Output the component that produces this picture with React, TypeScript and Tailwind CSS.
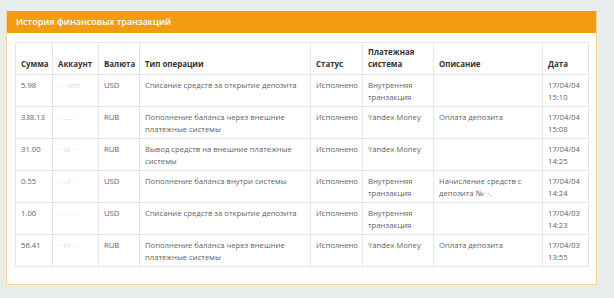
import React from 'react';

type Row = {
  sum: string;
  account: string;
  currency: string;
  type: string;
  status: string;
  system: string;
  description: string;
  date: string;
  time: string;
};

const rows: Row[] = [
  { sum: '5.98', account: '·.·,·ion', currency: 'USD', type: 'Списание средств за открытие депозита', status: 'Исполнено', system: 'Внутренняя транзакция', description: '', date: '17/04/04', time: '15:10' },
  { sum: '338.13', account: '·.·;...·', currency: 'RUB', type: 'Пополнение баланса через внешние платежные системы', status: 'Исполнено', system: 'Yandex Money', description: 'Оплата депозита', date: '17/04/04', time: '15:08' },
  { sum: '31.00', account: '· ·ui·· ·', currency: 'RUB', type: 'Вывод средств на внешние платежные системы', status: 'Исполнено', system: 'Yandex Money', description: '', date: '17/04/04', time: '14:25' },
  { sum: '0.55', account: '·  ,.·l··', currency: 'USD', type: 'Пополнение баланса внутри системы', status: 'Исполнено', system: 'Внутренняя транзакция', description: 'Начисление средств с депозита №·  ·.', date: '17/04/04', time: '14:24' },
  { sum: '1.00', account: '·.·,·.·.·.', currency: 'USD', type: 'Списание средств за открытие депозита', status: 'Исполнено', system: 'Внутренняя транзакция', description: '', date: '17/04/03', time: '14:23' },
  { sum: '56.41', account: '·   ·i·l··,', currency: 'RUB', type: 'Пополнение баланса через внешние платежные системы', status: 'Исполнено', system: 'Yandex Money', description: 'Оплата депозита', date: '17/04/03', time: '13:55' },
];

const th = 'h-[32px] border border-[#e6e6e6] px-[5px] pb-[4px] pt-[3px] text-left align-bottom text-[7.9px] font-bold text-[#333]';
const td = 'h-[32px] border border-[#e6e6e6] px-[5px] pt-[4px] pb-[3px] align-top text-[#5f5f5f] font-normal';

export default function App() {
  return (
    <div className="h-[298px] w-[614px] overflow-hidden bg-[#e9eced] pt-[11px] pl-[6px] pr-[17px]" style={{ fontFamily: '"Open Sans", sans-serif' }}>
      <div className="h-[274px] border border-[#f5d49a] border-t-0 bg-white">
        <div className="flex h-[22px] items-center bg-[#f39c12] px-[9px] text-[9px] font-semibold text-white">
          История финансовых транзакций
        </div>
        <div className="px-[8px] pt-[9px]">
          <table className="w-[573px] table-fixed border-collapse text-[7.7px] leading-[12px]">
            <colgroup>
              <col className="w-[37px]" />
              <col className="w-[46px]" />
              <col className="w-[41px]" />
              <col className="w-[171px]" />
              <col className="w-[52px]" />
              <col className="w-[71px]" />
              <col className="w-[109px]" />
              <col className="w-[46px]" />
            </colgroup>
            <thead>
              <tr>
                <th className={th}>Сумма</th>
                <th className={th}>Аккаунт</th>
                <th className={th}>Валюта</th>
                <th className={th}>Тип операции</th>
                <th className={th}>Статус</th>
                <th className={th}>Платежная<br />система</th>
                <th className={th}>Описание</th>
                <th className={th}>Дата</th>
              </tr>
            </thead>
            <tbody>
              {rows.map((r, i) => (
                <tr key={i}>
                  <td className={td}>{r.sum}</td>
                  <td className={`${td} overflow-hidden whitespace-nowrap text-[#d4d4d4]`}>{r.account}</td>
                  <td className={td}>{r.currency}</td>
                  <td className={td}>{r.type}</td>
                  <td className={td}>{r.status}</td>
                  <td className={td}>{r.system}</td>
                  <td className={td}>{r.description}</td>
                  <td className={td}>{r.date}<br />{r.time}</td>
                </tr>
              ))}
            </tbody>
          </table>
        </div>
      </div>
    </div>
  );
}
